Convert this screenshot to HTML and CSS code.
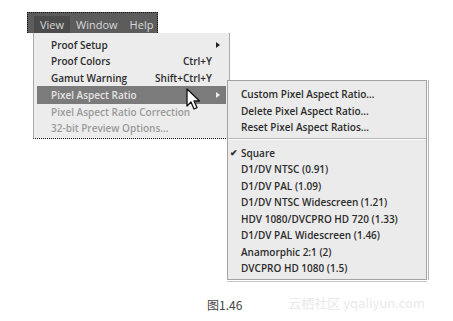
FILE: index.html
```html
<!DOCTYPE html>
<html lang="zh">
<head>
    <meta charset="UTF-8">
    <title>Pixel Aspect Ratio</title>
    <link rel="stylesheet" href="styles.css">
</head>
<body>
    <div class="stage">
        <div class="menubar">
            <span class="bar-item active">View</span>
            <span class="bar-item">Window</span>
            <span class="bar-item">Help</span>
        </div>
        <div class="menu">
            <div class="item"><span>Proof Setup</span><span class="arrow"></span></div>
            <div class="item"><span>Proof Colors</span><span class="key">Ctrl+Y</span></div>
            <div class="item"><span>Gamut Warning</span><span class="key">Shift+Ctrl+Y</span></div>
            <div class="item selected"><span>Pixel Aspect Ratio</span><span class="arrow"></span></div>
            <div class="item disabled"><span>Pixel Aspect Ratio Correction</span></div>
            <div class="item disabled"><span>32-bit Preview Options...</span></div>

            <div class="submenu">
                <div class="sub-item">Custom Pixel Aspect Ratio...</div>
                <div class="sub-item">Delete Pixel Aspect Ratio...</div>
                <div class="sub-item">Reset Pixel Aspect Ratios...</div>
                <div class="separator"></div>
                <div class="sub-item checked">Square</div>
                <div class="sub-item">D1/DV NTSC (0.91)</div>
                <div class="sub-item">D1/DV PAL (1.09)</div>
                <div class="sub-item">D1/DV NTSC Widescreen (1.21)</div>
                <div class="sub-item">HDV 1080/DVCPRO HD 720 (1.33)</div>
                <div class="sub-item">D1/DV PAL Widescreen (1.46)</div>
                <div class="sub-item">Anamorphic 2:1 (2)</div>
                <div class="sub-item">DVCPRO HD 1080 (1.5)</div>
            </div>

            <svg class="cursor" width="16" height="24" viewBox="0 0 16 24">
                <path d="M1 1 L1 18 L5 14 L8 21 L11 19.6 L8 13 L13.5 13 Z" fill="#fff" stroke="#111" stroke-width="1.3" stroke-linejoin="round"/>
            </svg>
        </div>

        <div class="caption">
            <span class="fig">图1.46</span>
            <span class="mark">云栖社区 yqaliyun.com</span>
        </div>
    </div>
</body>
</html>
```

FILE: styles.css
```css
body {
    margin: 0;
    background: #fff;
    font-family: "Open Sans", "Noto Sans", sans-serif;
}
.stage {
    width: 453px;
    height: 321px;
    padding: 12px 0 0 27px;
    box-sizing: border-box;
}
.menubar {
    display: flex;
    width: 131px;
    height: 21px;
    padding: 3px 0 0 6px;
    box-sizing: border-box;
    background: #5c5c5c;
    border: 1px dotted #111;
    border-bottom: none;
}
.bar-item {
    padding: 0 6px;
    font-size: 11px;
    line-height: 18px;
    color: #d8d8d8;
}
.bar-item.active {
    background: #4b4b4b;
}
.menu {
    position: relative;
    width: 195px;
    margin-left: 6px;
    padding: 4px 0 2px;
    background: #ececec;
    border-left: 1px solid #a9a9a9;
    border-right: 1px solid #a9a9a9;
    border-bottom: 1px dotted #111;
}
.item {
    display: flex;
    justify-content: space-between;
    align-items: center;
    height: 16.3px;
    margin: 0 3px;
    padding: 0 14px 0 14px;
    font-size: 10px;
    font-weight: 600;
    color: #2b2b2b;
}
.item.selected {
    height: 18px;
    background: #7b7b7b;
    color: #e4e4e4;
}
.item.disabled {
    color: #9a9a9a;
}
.arrow {
    width: 0;
    height: 0;
    margin-right: -8px;
    border-left: 4px solid #222;
    border-top: 3.5px solid transparent;
    border-bottom: 3.5px solid transparent;
}
.item.selected .arrow {
    border-left-color: #eee;
}
.submenu {
    position: absolute;
    left: 193px;
    top: 47px;
    width: 198px;
    padding: 5px 0 2px;
    background: #ebebeb;
    border: 1px solid #a3a3a3;
    box-shadow: 1px 0 0 #fff, 2px 0 0 #b5b5b5, 0 1px 0 #fff, 0 2px 0 #c8c8c8;
}
.sub-item {
    position: relative;
    height: 16.5px;
    line-height: 16.5px;
    padding-left: 13px;
    font-size: 10px;
    font-weight: 600;
    color: #2b2b2b;
}
.sub-item.checked::before {
    content: "\2714";
    position: absolute;
    left: 2px;
    top: 0;
    font-size: 9px;
}
.separator {
    height: 1px;
    margin: 2px 0 5px;
    background: #b8b8b8;
    border-bottom: 1px solid #fafafa;
}
.cursor {
    position: absolute;
    left: 152px;
    top: 55px;
}
.caption {
    display: flex;
    align-items: center;
    margin-top: 157px;
    padding-left: 180px;
}
.fig {
    font-family: "Noto Sans CJK SC", sans-serif;
    font-size: 12px;
    color: #444;
}
.mark {
    margin-left: 46px;
    margin-top: -5px;
    font-family: "Noto Sans CJK SC", sans-serif;
    font-size: 13px;
    color: #e9e9e9;
}
```
